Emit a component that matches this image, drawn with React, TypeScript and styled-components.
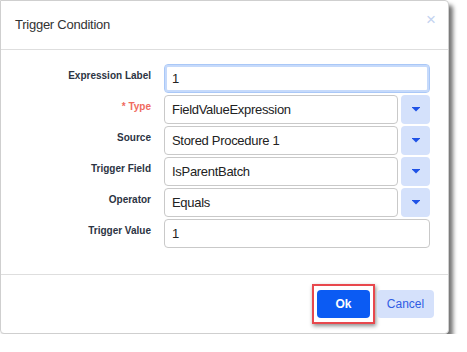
import React, { FC } from 'react';
import styled, { createGlobalStyle } from 'styled-components';

const GlobalStyle = createGlobalStyle`
  body {
    margin: 0;
    background: #ffffff;
    font-family: 'Liberation Sans', Arial, sans-serif;
  }
`;

const Dialog = styled.div`
  width: 449px;
  height: 334px;
  box-sizing: border-box;
  border: 1px solid #cfcfcf;
  border-radius: 0 4px 4px 4px;
  background: #ffffff;
  box-shadow: 4px 5px 4px rgba(0, 0, 0, 0.55);
  display: flex;
  flex-direction: column;
`;

const Header = styled.div`
  height: 49px;
  flex: none;
  box-sizing: border-box;
  border-bottom: 1px solid #dedede;
  display: flex;
  align-items: center;
  justify-content: space-between;
  padding: 0 12px 2px 14px;
`;

const Title = styled.h1`
  margin: 0;
  font-size: 13px;
  font-weight: normal;
  letter-spacing: -0.25px;
  color: #333333;
`;

const Close = styled.span`
  color: #c3d3f0;
  font-size: 17px;
  line-height: 1;
  margin-top: -9px;
`;

const Body = styled.div`
  flex: 1;
  padding-top: 14px;
  border-bottom: 1px solid #dedede;
`;

const Form = styled.div`
  display: grid;
  grid-template-columns: 150px 266px;
  column-gap: 13px;
  row-gap: 2px;
`;

const Label = styled.label<{ $required?: boolean }>`
  text-align: right;
  font-size: 10px;
  font-weight: bold;
  color: ${(p) => (p.$required ? '#ef6a5e' : '#2c3443')};
  padding-top: 6px;
`;

const Field = styled.div`
  display: flex;
  gap: 3px;
`;

const Input = styled.div<{ $focused?: boolean }>`
  flex: 1;
  height: 29px;
  box-sizing: border-box;
  border: 1px solid ${(p) => (p.$focused ? '#aac8f7' : '#c9c9c9')};
  box-shadow: ${(p) => (p.$focused ? 'inset 0 0 0 2px #c6dafb' : 'none')};
  border-radius: 4px;
  display: flex;
  align-items: center;
  padding-left: 7px;
  font-size: 13px;
  letter-spacing: -0.3px;
  color: #222222;
`;

const DropButton = styled.div`
  width: 29px;
  height: 29px;
  flex: none;
  border-radius: 4px;
  background: #d4e1fb;
  display: flex;
  align-items: center;
  justify-content: center;
`;

const Footer = styled.div`
  height: 58px;
  flex: none;
  display: flex;
  align-items: center;
  justify-content: flex-end;
  gap: 2px;
  padding: 0 14px 0 0;
`;

const Highlight = styled.div`
  border: 2px solid #e8484d;
  padding: 4px 3px;
  box-shadow: 1px 2px 4px rgba(0, 0, 0, 0.45);
  display: flex;
`;

const Button = styled.button<{ $primary?: boolean }>`
  height: 28px;
  border: none;
  border-radius: 4px;
  font-family: 'Liberation Sans', Arial, sans-serif;
  font-size: 12px;
  padding: 0;
  width: ${(p) => (p.$primary ? '53px' : '57px')};
  background: ${(p) => (p.$primary ? '#0b5bf3' : '#d5e1fb')};
  color: ${(p) => (p.$primary ? '#ffffff' : '#2f5de4')};
  font-weight: ${(p) => (p.$primary ? 'bold' : 'normal')};
`;

const Caret: FC = () => (
  <svg width="8" height="5" viewBox="0 0 8 5">
    <rect x="0" y="0" width="8" height="1" fill="#1f52e6" />
    <path d="M0.5 1 L7.5 1 L4 4.5 Z" fill="#1f52e6" />
  </svg>
);

interface Row {
  label: string;
  value: string;
  required?: boolean;
  select?: boolean;
  focused?: boolean;
}

const rows: Row[] = [
  { label: 'Expression Label', value: '1', focused: true },
  { label: '* Type', value: 'FieldValueExpression', required: true, select: true },
  { label: 'Source', value: 'Stored Procedure 1', select: true },
  { label: 'Trigger Field', value: 'IsParentBatch', select: true },
  { label: 'Operator', value: 'Equals', select: true },
  { label: 'Trigger Value', value: '1' },
];

const App: FC = () => {
  const fields = rows.map((row) => (
    <React.Fragment key={row.label}>
      <Label $required={row.required}>{row.label}</Label>
      <Field>
        <Input $focused={row.focused}>{row.value}</Input>
        {row.select && (
          <DropButton>
            <Caret />
          </DropButton>
        )}
      </Field>
    </React.Fragment>
  ));

  return (
    <>
      <GlobalStyle />
      <Dialog>
        <Header>
          <Title>Trigger Condition</Title>
          <Close>×</Close>
        </Header>
        <Body>
          <Form>{fields}</Form>
        </Body>
        <Footer>
          <Highlight>
            <Button $primary>Ok</Button>
          </Highlight>
          <Button>Cancel</Button>
        </Footer>
      </Dialog>
    </>
  );
};

export default App;
